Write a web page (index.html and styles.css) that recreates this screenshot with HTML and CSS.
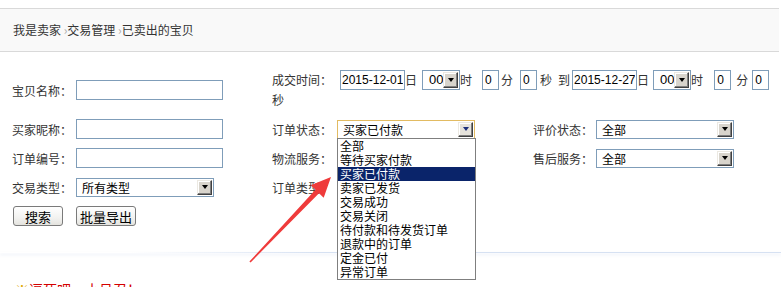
FILE: index.html
```html
<!DOCTYPE html>
<html lang="zh-CN">
<head>
    <meta charset="UTF-8">
    <title>已卖出的宝贝</title>
    <link rel="stylesheet" href="styles.css">
</head>
<body>
    <div class="crumbs">我是卖家 <span class="sep">›</span>交易管理 <span class="sep">›</span>已卖出的宝贝</div>

    <form class="search">
        <label class="lbl">宝贝名称：</label>
        <div><input class="txt" type="text"></div>
        <div class="time">
            <span>成交时间：</span>
            <input class="txt date d1" type="text" value="2015-12-01">
            <span>日</span>
            <span class="combo hour h1"><span class="combo-val">00</span><span class="combo-btn"><i class="tri"></i></span></span>
            <span>时</span>
            <input class="txt num n1" type="text" value="0">
            <span>分</span>
            <input class="txt num n2" type="text" value="0">
            <span>秒</span>
            <span class="to">到</span>
            <input class="txt date d2" type="text" value="2015-12-27">
            <span>日</span>
            <span class="combo hour h2"><span class="combo-val">00</span><span class="combo-btn"><i class="tri"></i></span></span>
            <span>时</span>
            <input class="txt num n3" type="text" value="0">
            <span>分</span>
            <input class="txt num n4" type="text" value="0">
            <span>秒</span>
        </div>

        <label class="lbl">买家昵称：</label>
        <div><input class="txt" type="text"></div>
        <label class="lbl">订单状态：</label>
        <div>
            <span class="combo on">
                <span class="combo-val">买家已付款</span><span class="combo-btn"><i class="tri"></i></span>
                <ul class="dropdown">
                    <li>全部</li>
                    <li>等待买家付款</li>
                    <li class="sel">买家已付款</li>
                    <li>卖家已发货</li>
                    <li>交易成功</li>
                    <li>交易关闭</li>
                    <li>待付款和待发货订单</li>
                    <li>退款中的订单</li>
                    <li>定金已付</li>
                    <li>异常订单</li>
                </ul>
            </span>
        </div>
        <label class="lbl">评价状态：</label>
        <div><span class="combo"><span class="combo-val">全部</span><span class="combo-btn"><i class="tri"></i></span></span></div>

        <label class="lbl">订单编号：</label>
        <div><input class="txt" type="text"></div>
        <label class="lbl">物流服务：</label>
        <div><span class="combo"><span class="combo-val">全部</span><span class="combo-btn"><i class="tri"></i></span></span></div>
        <label class="lbl">售后服务：</label>
        <div><span class="combo"><span class="combo-val">全部</span><span class="combo-btn"><i class="tri"></i></span></span></div>

        <label class="lbl">交易类型：</label>
        <div><span class="combo"><span class="combo-val">所有类型</span><span class="combo-btn"><i class="tri"></i></span></span></div>
        <label class="lbl">订单类型：</label>
        <div class="wide"><span class="combo"><span class="combo-val">全部</span><span class="combo-btn"><i class="tri"></i></span></span></div>

        <div><button class="btn btn-search" type="button">搜索</button></div>
        <div class="wide"><button class="btn btn-export" type="button">批量导出</button></div>
    </form>

    <div class="divider"></div>
    <div class="note"><span class="mark">※</span>逗死吧，小号召！</div>

    <svg class="arrow" width="781" height="287" viewBox="0 0 781 287">
        <polygon points="249.4,261.6 315.4,189.8 310.7,185.3 331,177 323.7,197.7 319,193.2 250.6,262.4" fill="#ef3b3b"/>
    </svg>
</body>
</html>
```

FILE: styles.css
```css
* {
    box-sizing: border-box;
}

body {
    margin: 0;
    font-family: "Noto Sans CJK SC", sans-serif;
    font-size: 12px;
    color: #333;
    background: #fff;
    position: relative;
    height: 287px;
    overflow: hidden;
}

.crumbs {
    margin: 8px 2px 0 0;
    height: 44px;
    line-height: 42px;
    padding-left: 13px;
    background: #f9f9f9;
    border-top: 1px solid #d9d9d9;
    border-bottom: 1px solid #d9d9d9;
}

.crumbs .sep {
    color: #aaa;
}

/* search form grid */
.search {
    display: grid;
    grid-template-columns: 64px 196px 65px 196px 63px 1fr;
    grid-template-rows: 40px 20px 20px 20px 20px;
    row-gap: 9px;
    align-items: center;
    padding: 18px 0 0 12px;
    margin: 0;
}

.lbl {
    white-space: nowrap;
}

.wide {
    grid-column: span 3;
}

.txt {
    height: 20px;
    width: 147px;
    margin: 0;
    padding: 0 2px;
    border: 1px solid #7f9db9;
    font-family: "Liberation Sans", sans-serif;
    font-size: 12px;
    color: #000;
    vertical-align: top;
}

.time {
    grid-column: 3 / 7;
    align-self: start;
    display: flex;
    flex-wrap: wrap;
    align-items: center;
    line-height: 20px;
}

.time .date {
    width: 65px;
    padding: 0 1px;
}

.time .num {
    width: 17px;
}

.d1 { margin-left: 8px; }
.h1 { margin-left: 5px; }
.n1 { margin: 0 2px 0 10px; }
.n2 { margin: 0 3px 0 7px; }
.to { margin: 0 2px 0 6px; }
.h2 { margin-left: 4px; }
.n3 { margin: 0 5px 0 11px; }
.n4 { margin: 0 3px 0 4px; }

/* classic combo box */
.combo {
    position: relative;
    display: inline-flex;
    width: 138px;
    height: 19px;
    padding: 1px;
    border: 1px solid #7f9db9;
    background: #fff;
    color: #000;
    vertical-align: top;
}

.combo.on {
    border-color: #e2bb62;
}

.combo.hour {
    width: 38px;
    height: 20px;
}

.combo-val {
    flex: 1;
    padding-left: 4px;
    line-height: 15px;
    white-space: nowrap;
    overflow: hidden;
}

.hour .combo-val {
    font-family: "Liberation Sans", sans-serif;
    font-size: 13px;
    padding-left: 5px;
    line-height: 16px;
}

.combo-btn {
    width: 15px;
    display: flex;
    align-items: center;
    justify-content: center;
    background: #d8d4cc;
    border: 1px solid;
    border-color: #ece9e2 #404040 #404040 #ece9e2;
    box-shadow: inset -1px -1px 0 #808080, inset 1px 1px 0 #fff;
}

.combo.on .combo-btn {
    background: #e6e3dc;
}

.tri {
    width: 0;
    height: 0;
    border-left: 3.5px solid transparent;
    border-right: 3.5px solid transparent;
    border-top: 4px solid #000;
}

.combo.on .tri {
    border-top-color: #1c2f7a;
}

.dropdown {
    position: absolute;
    top: 100%;
    left: -1px;
    width: 139px;
    margin: 0;
    padding: 0;
    list-style: none;
    background: #fff;
    border: 1px solid #7f7f7f;
    z-index: 2;
}

.dropdown li {
    height: 14px;
    line-height: 14px;
    padding-left: 2px;
    font-size: 12px;
    color: #000;
    white-space: nowrap;
}

.dropdown li.sel {
    background: #0a246a;
    color: #fff;
}

.btn {
    height: 20px;
    margin: 0;
    padding: 0;
    border: 1px solid #7a7a7a;
    border-radius: 3px;
    background: linear-gradient(#fff, #f2f2f0 60%, #e4e3de);
    font-family: "Noto Sans CJK SC", sans-serif;
    font-size: 13px;
    line-height: 17px;
    color: #000;
}

.btn-search {
    width: 50px;
    margin-left: 1px;
}

.btn-export {
    width: 60px;
}

.divider {
    height: 1px;
    margin-top: 26px;
    background: linear-gradient(to right, rgba(214, 225, 242, 0) 130px, #d6e1f2 320px, #d6e1f2);
    box-shadow: 0 2px 3px rgba(205, 218, 238, 0.5);
}

.note {
    margin-top: 28px;
    padding-left: 15px;
    font-size: 14px;
    line-height: 16px;
    color: #d40000;
}

.note .mark {
    color: #e0a800;
}

.arrow {
    position: absolute;
    left: 0;
    top: 0;
    pointer-events: none;
}
```
